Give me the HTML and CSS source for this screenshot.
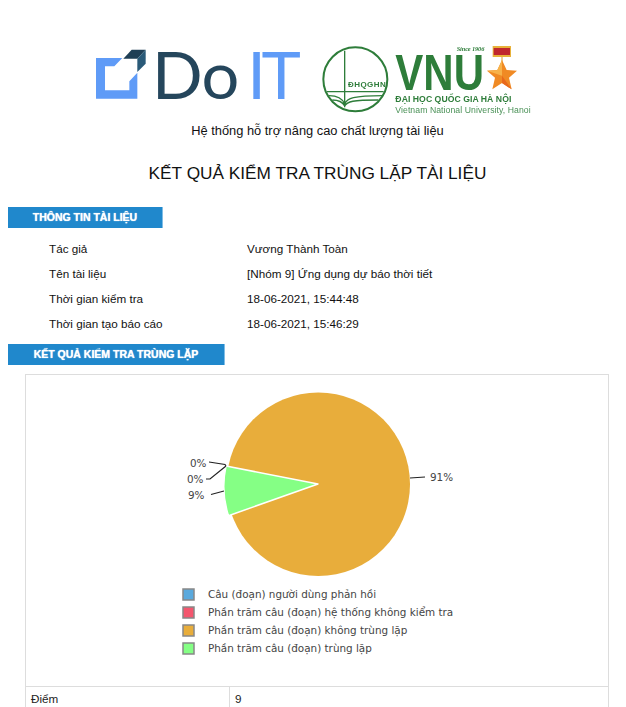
FILE: index.html
```html
<!DOCTYPE html>
<html lang="vi">
<head>
<meta charset="utf-8">
<title>Kết quả kiểm tra trùng lặp tài liệu</title>
<link rel="stylesheet" href="styles.css">
</head>
<body>
<header class="logos">
  <svg class="logo-doit" viewBox="48 50 612 160" aria-label="DoIT">
    <polygon fill="#5f9bf7" points="48,83 127,83 103,108 75,108 75,180 148,180 148,153 172,127 172,205 48,205"/>
    <polygon fill="#1f3f55" points="130,85 155,58 197,58 172,85"/>
    <polygon fill="#2a5a78" points="172,85 197,58 197,100 172,125"/>
    <text class="doit-do" x="216" y="205" textLength="262">Do</text>
    <text class="doit-it" x="502" y="205" textLength="161">IT</text>
  </svg>
  <svg class="logo-vnu" viewBox="35 45 630 210" aria-label="VNU">
    <circle cx="135" cy="148" r="96" fill="none" stroke="#2e7d3a" stroke-width="6"/>
    <path d="M103 62V232M50 185H220M56 197C83 197 96 205 103 222C110 205 128 197 218 197M66 210C83 210 96 214 103 228C110 214 128 210 204 210" fill="none" stroke="#2e7d3a" stroke-width="4"/>
    <text class="vnu-dh" x="113" y="172" textLength="113">ĐHQGHN</text>
    <text class="vnu-big" x="255" y="180" textLength="266" lengthAdjust="spacingAndGlyphs">VNU</text>
    <text class="vnu-since" x="439" y="62" textLength="83">Since 1906</text>
    <rect x="547" y="48" width="55" height="33" fill="#e8b23a"/>
    <rect x="550" y="54" width="49" height="21" fill="#c0272d"/>
    <path d="M575 81V95" stroke="#d9a030" stroke-width="3"/>
    <polygon fill="#f08a24" points="575,90 589,120 620,122 596,143 604,178 575,159 546,178 554,143 530,122 561,120"/>
    <polygon fill="#f7b24a" points="575,90 575,137 530,122 561,120"/>
    <polygon fill="#e8691c" points="575,137 604,178 575,159"/>
    <text class="vnu-dhqg" x="255" y="216" textLength="348">ĐẠI HỌC QUỐC GIA HÀ NỘI</text>
    <text class="vnu-en" x="255" y="250" textLength="406">Vietnam National University, Hanoi</text>
  </svg>
</header>
<p class="subtitle">Hệ thống hỗ trợ nâng cao chất lượng tài liệu</p>
<h1 class="title">KẾT QUẢ KIỂM TRA TRÙNG LẶP TÀI LIỆU</h1>

<h2 class="bar bar-info">THÔNG TIN TÀI LIỆU</h2>
<dl class="info">
  <div class="info-row"><dt>Tác giả</dt><dd>Vương Thành Toàn</dd></div>
  <div class="info-row"><dt>Tên tài liệu</dt><dd>[Nhóm 9] Ứng dụng dự báo thời tiết</dd></div>
  <div class="info-row"><dt>Thời gian kiểm tra</dt><dd>18-06-2021, 15:44:48</dd></div>
  <div class="info-row"><dt>Thời gian tạo báo cáo</dt><dd>18-06-2021, 15:46:29</dd></div>
</dl>

<h2 class="bar bar-result">KẾT QUẢ KIỂM TRA TRÙNG LẶP</h2>
<table class="result">
  <colgroup><col class="col-label"><col></colgroup>
  <tr>
    <td colspan="2" class="chart-cell">
      <svg class="chart" viewBox="26 375 582 311">
        <circle cx="318.300" cy="484.200" r="91.700" fill="#e8ad3b"/>
        <path d="M318 484L226 466A94.500 94.500 0 0 0 228.500 515.700Z" fill="#85ff85" stroke="#fff" stroke-width="1.500" stroke-linejoin="round"/>
        <path class="leader" d="M209 462L225 464.500L226 466M206 479H210L226 466M211 494.500L224 491M410 478L425 477"/>
        <text class="pct" x="190" y="467">0%</text>
        <text class="pct" x="187" y="483">0%</text>
        <text class="pct" x="188" y="499">9%</text>
        <text class="pct" x="430" y="481">91%</text>
        <rect class="swatch" x="183" y="589" width="11" height="11" fill="#5aa9dd"/>
        <rect class="swatch" x="183" y="607" width="11" height="11" fill="#f4566e"/>
        <rect class="swatch" x="183" y="625" width="11" height="11" fill="#e8ad3b"/>
        <rect class="swatch" x="183" y="643" width="11" height="11" fill="#85ff85"/>
        <text class="legend" x="208" y="598">Câu (đoạn) người dùng phản hồi</text>
        <text class="legend" x="208" y="616">Phần trăm câu (đoạn) hệ thống không kiểm tra</text>
        <text class="legend" x="208" y="634">Phần trăm câu (đoạn) không trùng lặp</text>
        <text class="legend" x="208" y="652">Phần trăm câu (đoạn) trùng lặp</text>
      </svg>
    </td>
  </tr>
  <tr>
    <td>Điểm</td>
    <td>9</td>
  </tr>
</table>
</body>
</html>
```
FILE: styles.css
```css
html, body { margin: 0; padding: 0; background: #fff; }
html { overflow: hidden; }
body {
  width: 626px;
  font-family: "Liberation Sans", Arial, sans-serif;
  font-size: 11.7px;
  color: #111;
}
.logos {
  display: flex;
  justify-content: center;
  align-items: flex-start;
  gap: 22px;
  padding: 45px 0 0 2px;
  height: 75px;
}
.logo-doit { width: 204px; height: 53.33px; margin-top: 2px; filter: blur(0.4px); }
.logo-vnu { width: 210px; height: 70px; filter: blur(0.3px); }
.doit-do { font: 400 200px Lato, sans-serif; fill: #25465c; }
.doit-it { font: 400 200px Lato, sans-serif; fill: #5f9bf7; }
.vnu-dh { font: 700 24px "Liberation Sans", sans-serif; fill: #2e7d3a; }
.vnu-big { font: 700 150px "Liberation Sans", sans-serif; fill: #2e7d3a; }
.vnu-since { font: italic 700 19px "Liberation Serif", serif; fill: #2e7d3a; }
.vnu-dhqg { font: 700 26px "Liberation Sans", sans-serif; fill: #2e7d3a; }
.vnu-en { font: 400 26px "Liberation Sans", sans-serif; fill: #4a9157; }
.subtitle {
  margin: 1px 0 0 9px;
  text-align: center;
  font-size: 12.85px;
  line-height: 20px;
}
.title {
  margin: 20px 0 0 9px;
  text-align: center;
  font-size: 17.25px;
  font-weight: 400;
  line-height: 24px;
}
.bar {
  margin: 0 0 0 8px;
  height: 21px;
  line-height: 21px;
  background: #2088cc;
  border-right: 1px solid #7fbde6;
  color: #fff;
  font-size: 10.5px;
  font-weight: 700;
  text-align: center;
  text-shadow: 0 0 1px #fff;
}
.bar-info { width: 154px; margin-top: 22px; }
.bar-result { width: 216px; }
.info { margin: 8px 0 8px 49px; }
.info-row {
  display: flex;
  height: 25px;
  line-height: 25px;
}
.info-row dt { width: 198px; }
.info-row dd { margin: 0; }
.result {
  border-collapse: collapse;
  table-layout: fixed;
  width: 584px;
  margin: 9px 0 0 25px;
}
.col-label { width: 204px; }
.result td {
  border: 1px solid #ddd;
  padding: 0 5px;
  height: 24px;
  line-height: 24px;
  color: #222;
}
.result td.chart-cell { padding: 0; height: 311px; }
.chart { display: block; width: 582px; height: 311px; }
.leader { fill: none; stroke: #222; stroke-width: 1.200; }
.pct { font: 10.4px "DejaVu Sans", sans-serif; fill: #444; }
.legend { font: 10.4px "DejaVu Sans", sans-serif; fill: #444; }
.swatch { stroke: #888; stroke-width: 1.500; }
```
